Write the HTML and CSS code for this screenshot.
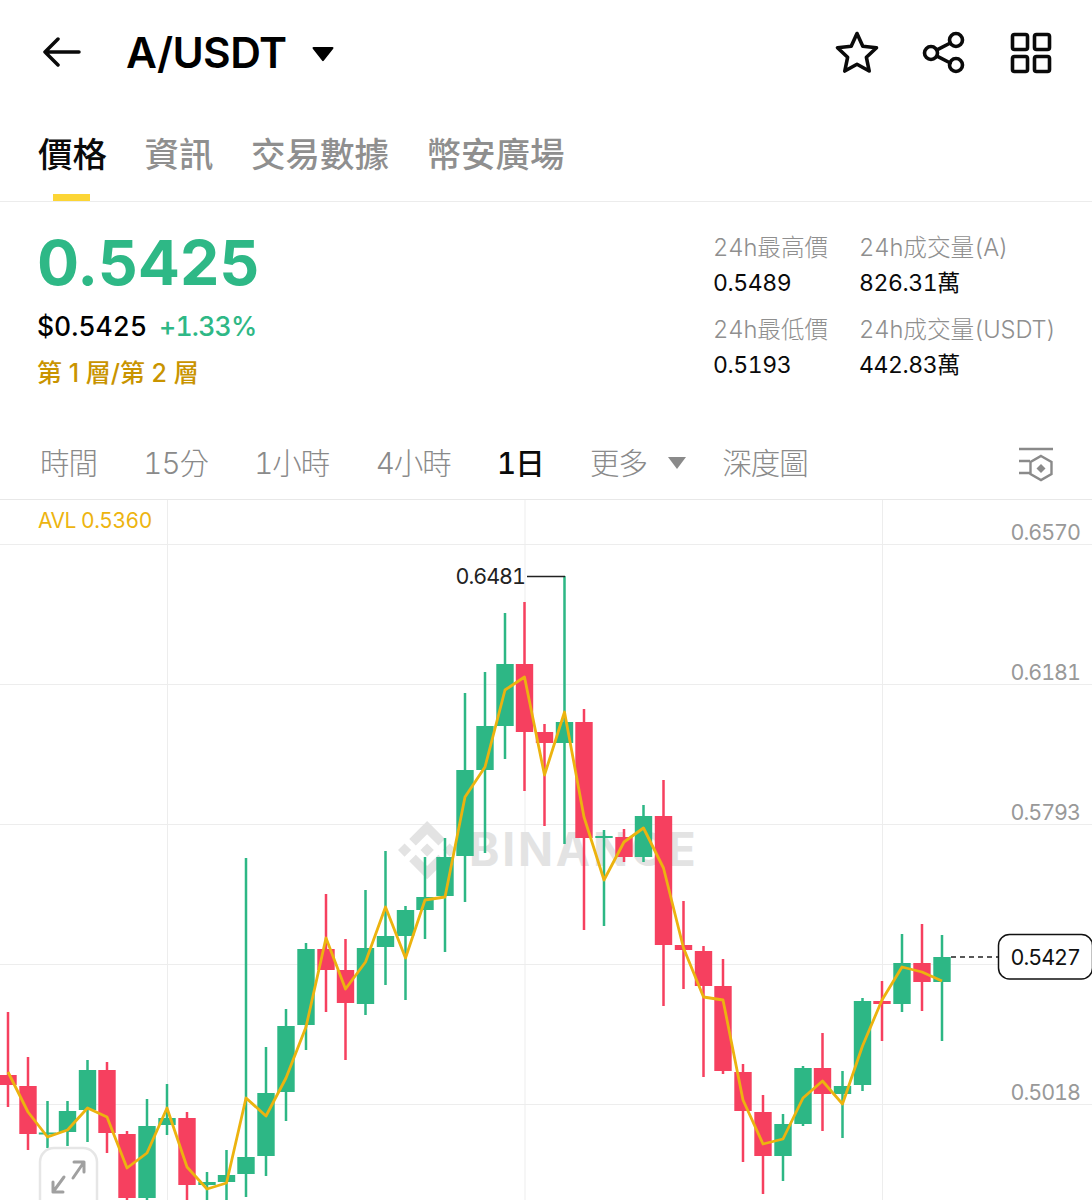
FILE: index.html
```html
<!DOCTYPE html>
<html lang="zh-Hant">
<head>
<meta charset="utf-8">
<title>A/USDT</title>
<link rel="stylesheet" href="styles.css">
</head>
<body>
<main class="page">
  <header class="topbar">
    <div class="topbar-left">
      <svg class="icon-back" viewBox="0 0 40 32"><path d="M37 15H3M16 2 3 15l13 13"/></svg>
      <h1 class="pair">A/USDT</h1>
      <svg class="icon-caret" viewBox="0 0 22 16"><path d="M1.500 1h19a1 1 0 0 1 .7 1.700l-9.500 12a1 1 0 0 1-1.500 0L.8 2.700A1 1 0 0 1 1.500 1z"/></svg>
    </div>
    <div class="topbar-right">
      <svg class="icon" viewBox="0 0 48 48"><path d="M24 4.500 29.800 17.200 43.500 18.800 33.400 28.300 36.200 42 24 35.200 11.800 42 14.600 28.300 4.500 18.800 18.200 17.200z"/></svg>
      <svg class="icon" viewBox="0 0 48 48"><circle cx="11" cy="24" r="6.500"/><circle cx="36" cy="11" r="6.500"/><circle cx="36" cy="36" r="6.500"/><path d="m17 20.800 13.300-6.800M17 27.200l13.300 6.800"/></svg>
      <svg class="icon" viewBox="0 0 48 48"><rect x="5.500" y="5.500" width="15" height="15" rx="2"/><rect x="27.500" y="5.500" width="15" height="15" rx="2"/><rect x="5.500" y="27.500" width="15" height="15" rx="2"/><rect x="27.500" y="27.500" width="15" height="15" rx="2"/></svg>
    </div>
  </header>

  <nav class="tabs">
    <span class="tab tab-active">價格</span>
    <span class="tab">資訊</span>
    <span class="tab">交易數據</span>
    <span class="tab">幣安廣場</span>
  </nav>

  <section class="summary">
    <div class="quote">
      <div class="last-price">0.5425</div>
      <div class="fiat-row"><span class="fiat">$0.5425</span><span class="change">+1.33%</span></div>
      <div class="layer">第 1 層/第 2 層</div>
    </div>
    <dl class="stats">
      <div class="stat"><dt>24h最高價</dt><dd>0.5489</dd></div>
      <div class="stat"><dt>24h成交量(A)</dt><dd>826.31萬</dd></div>
      <div class="stat"><dt>24h最低價</dt><dd>0.5193</dd></div>
      <div class="stat"><dt>24h成交量(USDT)</dt><dd>442.83萬</dd></div>
    </dl>
  </section>

  <div class="intervals">
    <span class="interval">時間</span>
    <span class="interval">15分</span>
    <span class="interval">1小時</span>
    <span class="interval">4小時</span>
    <span class="interval interval-active">1日</span>
    <span class="interval interval-more">更多<svg class="caret-small" viewBox="0 0 18 12"><path d="M0 0h18L9 12z"/></svg></span>
    <span class="interval">深度圖</span>
    <svg class="icon-settings" viewBox="0 0 36 36"><path class="st" d="M1 3h34M1 15h11M1 27h11"/><path class="st" d="M23 10.500 33.500 16.500V28.500L23 34.500 12.500 28.500V16.500z" transform="translate(0 -.5)"/><path class="fl" d="m23 18 4.500 4.500-4.500 4.500-4.500-4.500z"/></svg>
  </div>

  <section class="chart">
    <svg class="chart-svg" viewBox="0 500 1092 700">
      <path class="grid" d="M0 544.500H1092M0 684.500H1092M0 824.500H1092M0 964.500H1092M0 1104.500H1092M167.500 500V1200M525 500V1200M882.500 500V1200"/>

      <g class="watermark">
        <path transform="translate(398 821) scale(.46)" d="M38.730 53.200l24.590-24.580 24.600 24.600 14.300-14.310L63.320 0 24.430 38.900zM0 63.310l14.300-14.310 14.310 14.310-14.310 14.300zM38.730 73.410l24.590 24.590 24.600-24.600 14.310 14.290-38.900 38.910-38.910-38.880-.02-.02zM98 63.310l14.300-14.310 14.310 14.310-14.300 14.300zM77.830 63.300 63.320 48.780 52.590 59.510l-1.240 1.230-2.540 2.540 14.510 14.500 14.510-14.470z"/>
        <text class="watermark-text" x="469" y="866">BINANCE</text>
      </g>

      <path class="wick up" d="M47.500 1101V1148M67.500 1101V1146M87.500 1060V1142M147 1099V1200M167 1084V1135M207 1172V1200M226.500 1150V1200M246 858V1197M266 1047V1176M286 1009V1121M306 943V1050M365.500 890V1015M385.500 851V985M405.500 906V1000M425 857V939M445 838V952M465 693V902M485 672V853M505 613V759M564.500 576V844M604 830V926M643.500 805V862M783 1114V1181M803 1066V1126M842.500 1071V1138M862.500 998V1091M902 934V1012M942 935V1041"/>
      <path class="wick down" d="M8 1012V1107M28 1057V1150M107 1062V1153M127 1131V1200M187 1112V1200M326 894V1012M345.500 939V1060M524.500 602V791M544.500 724V826M584 709V930M624 829V862M663.500 780V1006M683.500 901V989M703.500 946V1077M723 959V1074M743 1064V1162M763 1095V1194M822.500 1033V1131M882 981V1041M922 924V1011"/>
      <path class="body up" d="M47.500 1132.500V1134.500M67.500 1111V1132M87.500 1070V1110M147 1126V1198M167 1118V1125M207 1182V1185M226.500 1175V1182M246 1157V1174M266 1093V1156M286 1026V1092M306 949V1025M365.500 948V1004M385.500 936V947M405.500 910V936M425 897V910M445 857V896M465 770V856M485 726V770M505 664V726M564.500 722V743M604 836V838M643.500 816V857M783 1124V1156M803 1068V1124M842.500 1086V1094M862.500 1001V1085M902 963V1004M942 957V982"/>
      <path class="body down" d="M8 1075V1085M28 1086V1134M107 1070V1133M127 1134V1198M187 1118V1185M326 949V970M345.500 970V1003M524.500 664V732M544.500 732V743M584 722V838M624 837V857M663.500 816V945M683.500 945V950M703.500 951V986M723 986V1071M743 1072V1111M763 1112V1156M822.500 1068V1094M882 1001V1004M922 963V982"/>

      <polyline class="avl" points="8,1072 28,1112 47.500,1137 67.500,1130 87.500,1108 107,1117 127,1168 147,1153 167,1108 187,1167 207,1189 226.500,1183 246,1098 266,1116 286,1078 306,1027 326,938 345.500,989 365.500,962 385.500,907 405.500,958 425,900 445,897 465,797 485,767 505,690 524.500,677 544.500,775 564.500,712 584,817 604,880 624,842 643.500,828 663.500,868 683.500,948 703.500,997 723,1000 743,1100 763,1144 783,1139 803,1098 822.500,1081 842.500,1104 862.500,1046 882,1000 902,967 922,972 942,981"/>

      <text class="avl-label" x="38" y="528">AVL 0.5360</text>
      <text class="axis" x="1080" y="540">0.6570</text>
      <text class="axis" x="1080" y="680">0.6181</text>
      <text class="axis" x="1080" y="820">0.5793</text>
      <text class="axis" x="1080" y="1100">0.5018</text>

      <text class="peak" x="525" y="584">0.6481</text>
      <path class="peak-line" d="M527 576.500H565"/>

      <path class="last-line" d="M951 957H998"/>
      <rect class="tag" x="998.500" y="934.500" width="94" height="44.500" rx="11"/>
      <text class="tag-text" x="1080" y="965">0.5427</text>

      <rect class="expand" x="40" y="1148" width="57" height="70" rx="14"/>
      <path class="expand-arrow" d="M73 1178 84 1162M84 1162H74M84 1162V1172M64 1177 53 1192M53 1192H63M53 1192V1182" />
    </svg>
  </section>
</main>
</body>
</html>
```
FILE: styles.css
```css
* { box-sizing: border-box; margin: 0; padding: 0; }

html, body { background: #fff; }

body {
  width: 1092px;
  height: 1200px;
  overflow: hidden;
  font-family: Inter, "Noto Sans CJK TC", sans-serif;
  font-variant-numeric: tabular-nums;
  color: #000;
}

.page { display: flex; flex-direction: column; height: 1200px; }

/* top bar */
.topbar {
  height: 105px;
  flex: none;
  display: flex;
  align-items: center;
  justify-content: space-between;
  padding: 0 37px 0 42px;
}
.topbar-left { display: flex; align-items: center; }
.icon-back {
  width: 40px;
  height: 32px;
  fill: none;
  stroke: #0a0a0a;
  stroke-width: 3.5;
  stroke-linecap: round;
  stroke-linejoin: round;
}
.pair {
  margin-left: 44px;
  font-size: 42.500px;
  line-height: 50px;
  font-weight: 600;
  letter-spacing: -0.6px;
  font-variant-numeric: normal;
}
.icon-caret { width: 22px; height: 16px; margin-left: 26px; margin-top: 2px; fill: #000; }
.topbar-right { display: flex; gap: 39px; align-items: center; }
.icon {
  width: 48px;
  height: 48px;
  fill: none;
  stroke: #0a0a0a;
  stroke-width: 3.6;
  stroke-linejoin: round;
  stroke-linecap: round;
}

/* tabs */
.tabs {
  height: 97px;
  flex: none;
  display: flex;
  gap: 37.500px;
  padding: 25px 0 0 38px;
  border-bottom: 1px solid #ececec;
}
.tab {
  position: relative;
  font-size: 34.500px;
  line-height: 50px;
  font-weight: 500;
  color: #8f8f8f;
}
.tab-active { color: #0a0a0a; font-weight: 500; }
.tab-active::after {
  content: "";
  position: absolute;
  left: 15px;
  width: 37px;
  bottom: 0;
  height: 7px;
  background: #fcd535;
}

/* summary */
.summary {
  height: 228px;
  flex: none;
  display: flex;
  justify-content: space-between;
  padding: 25px 0 0 37px;
}
.last-price {
  font-size: 62.500px;
  line-height: 70px;
  font-weight: 700;
  color: #2eb886;
  font-variant-numeric: normal;
}
.fiat-row { display: flex; gap: 12px; margin-top: 11px; font-size: 26.500px; line-height: 36px; }
.fiat { font-weight: 500; }
.change { color: #2eb886; font-weight: 500; letter-spacing: -0.8px; }
.layer { margin-top: 11px; font-size: 25px; line-height: 36px; color: #c99400; font-weight: 500; font-variant-numeric: normal; }

.stats {
  display: grid;
  grid-template-columns: 146px 233px;
  row-gap: 11px;
  align-content: start;
  padding-top: 3px;
}
.stat dt { font-size: 23.700px; line-height: 36px; font-weight: 300; color: #8f8f8f; white-space: nowrap; letter-spacing: -0.1px; }
.stat dd { font-size: 23px; line-height: 35px; font-weight: 400; color: #0a0a0a; white-space: nowrap; letter-spacing: -0.4px; }

/* interval bar */
.intervals {
  height: 70px;
  flex: none;
  display: flex;
  align-items: center;
  gap: 46.300px;
  padding: 0 38px 4px 40px;
  border-bottom: 1px solid #e8e8e8;
}
.interval { font-size: 29.500px; line-height: 40px; font-weight: 300; color: #8a8a8a; white-space: nowrap; letter-spacing: -1px; }
.interval-active { color: #0a0a0a; font-weight: 500; }
.interval-more { display: flex; align-items: center; gap: 21px; margin-right: -10px; }
.caret-small { width: 18px; height: 12px; fill: #8a8a8a; }
.icon-settings { margin-left: auto; margin-top: 2px; width: 36px; height: 36px; flex: none; fill: none; }
.icon-settings .st { stroke: #8a8a8a; stroke-width: 2.400; }
.icon-settings .fl { fill: #8a8a8a; }

/* chart */
.chart { flex: 1; min-height: 0; }
.chart-svg { display: block; width: 1092px; height: 700px; }
.grid { fill: none; stroke: #ededed; stroke-width: 1; }
.watermark { fill: #e3e3e3; }
.watermark-text { font-size: 46px; font-weight: 700; letter-spacing: 2.800px; }
.wick { fill: none; stroke-width: 2.500; }
.body { fill: none; stroke-width: 17.400; }
.up { stroke: #2db785; }
.down { stroke: #f6405f; }
.avl { fill: none; stroke: #ecb30f; stroke-width: 2.800; stroke-linejoin: round; }
.avl-label { font-size: 21px; fill: #edb40f; font-weight: 400; letter-spacing: -0.5px; }
.axis { font-size: 21.500px; fill: #999; text-anchor: end; font-weight: 400; letter-spacing: -1px; }
.peak { font-size: 21.500px; fill: #222; text-anchor: end; letter-spacing: -1px; }
.peak-line { fill: none; stroke: #222; stroke-width: 1.500; }
.last-line { fill: none; stroke: #222; stroke-width: 1.500; stroke-dasharray: 5 4; }
.tag { fill: #fff; stroke: #111; stroke-width: 1.500; }
.tag-text { font-size: 21.500px; fill: #111; text-anchor: end; letter-spacing: -1px; }
.expand { fill: rgba(255,255,255,.72); stroke: #e6e6e6; stroke-width: 2.500; }
.expand-arrow { fill: none; stroke: #a0a0a0; stroke-width: 3; stroke-linecap: round; stroke-linejoin: round; }
```
